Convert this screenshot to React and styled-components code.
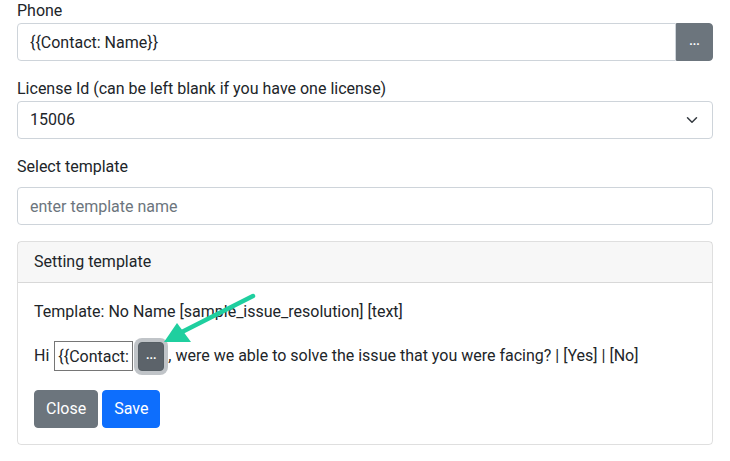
import React from 'react'
import styled, { createGlobalStyle } from 'styled-components'

const GlobalStyle = createGlobalStyle`
  html, body {
    margin: 0;
    padding: 0;
    background: #fff;
  }
  body {
    font-family: Roboto, "Liberation Sans", sans-serif;
    font-size: 16px;
    line-height: 1.5;
    color: #212529;
  }
`

const Page = styled.div`
  position: relative;
  width: 696px;
  padding: 0 17px;
  margin-top: -1px;
`

const Label = styled.label`
  display: block;
  height: 24px;
  margin-bottom: ${p => p.gap || 0}px;
`

const Group = styled.div`
  margin-bottom: 16px;
`

const InputGroup = styled.div`
  display: flex;
  height: 38px;
`

const TextInput = styled.input`
  flex: 1;
  min-width: 0;
  box-sizing: border-box;
  height: 38px;
  padding: 6px 12px;
  font: inherit;
  color: #212529;
  border: 1px solid #ced4da;
  border-radius: ${p => (p.joined ? '4px 0 0 4px' : '4px')};
  background: #fff;
  outline: none;
  &::placeholder {
    color: #6c757d;
  }
`

const AddonButton = styled.button`
  width: 37px;
  border: 1px solid #6c757d;
  background: #6c757d;
  color: #fff;
  border-radius: 0 4px 4px 0;
  font-family: inherit;
  font-size: 12px;
  font-weight: 700;
  padding: 0 0 2px;
`

const SelectBox = styled.div`
  display: flex;
  align-items: center;
  justify-content: space-between;
  box-sizing: border-box;
  height: 38px;
  padding: 6px 12px;
  border: 1px solid #ced4da;
  border-radius: 4px;
`

const Card = styled.div`
  position: relative;
  margin-top: 16px;
  border: 1px solid rgba(0, 0, 0, 0.125);
  border-radius: 4px;
`

const CardHeader = styled.div`
  padding: 8px 16px;
  background: rgba(0, 0, 0, 0.03);
  border-bottom: 1px solid rgba(0, 0, 0, 0.125);
`

const CardBody = styled.div`
  padding: 16px;
`

const Para = styled.p`
  margin: 1px 0 16px;
`

const MessageRow = styled.div`
  display: flex;
  align-items: center;
  height: 32px;
  margin-bottom: 18px;
  white-space: nowrap;
`

const SmallInput = styled.input`
  box-sizing: border-box;
  width: 79px;
  height: 30px;
  margin: 0 1px 0 5px;
  padding: 0 3px;
  font: inherit;
  color: #212529;
  border: 1px solid #767676;
  border-radius: 0;
  outline: none;
`

const DotsButton = styled.button`
  width: 26px;
  height: 29px;
  margin: 0 4px 0 4px;
  border: 1px solid #565e64;
  border-radius: 4px;
  background: #5c636a;
  color: #fff;
  font-family: inherit;
  font-size: 12px;
  font-weight: 700;
  padding: 0 0 2px;
  box-shadow: 0 0 0 4px rgba(130, 138, 145, 0.5);
`

const Actions = styled.div`
  display: flex;
  gap: 4px;
`

const Btn = styled.button`
  height: 38px;
  padding: 0 11px;
  border: 1px solid ${p => (p.primary ? '#0d6efd' : '#6c757d')};
  background: ${p => (p.primary ? '#0d6efd' : '#6c757d')};
  color: #fff;
  border-radius: 4px;
  font: inherit;
`

const Arrow = styled.svg`
  position: absolute;
  left: 0;
  top: 0;
  pointer-events: none;
`

export default function App() {
  return (
    <Page>
      <GlobalStyle />
      <Label>Phone</Label>
      <Group>
        <InputGroup>
          <TextInput joined defaultValue="{{Contact: Name}}" />
          <AddonButton>...</AddonButton>
        </InputGroup>
      </Group>

      <Label>License Id (can be left blank if you have one license)</Label>
      <Group>
        <SelectBox>
          <span>15006</span>
          <svg width="16" height="12" viewBox="0 0 16 16">
            <path d="m2 5 6 6 6-6" fill="none" stroke="#343a40" strokeWidth="2" strokeLinecap="round" strokeLinejoin="round" />
          </svg>
        </SelectBox>
      </Group>

      <Label gap={8}>Select template</Label>
      <TextInput style={{ width: '100%' }} placeholder="enter template name" />

      <Card>
        <CardHeader>Setting template</CardHeader>
        <CardBody>
          <Para>Template: No Name [sample_issue_resolution] [text]</Para>
          <MessageRow>
            Hi
            <SmallInput defaultValue="{{Contact: Name}}" />
            <DotsButton>...</DotsButton>
            , were we able to solve the issue that you were facing? | [Yes] | [No]
          </MessageRow>
          <Actions>
            <Btn>Close</Btn>
            <Btn primary>Save</Btn>
          </Actions>
        </CardBody>
      </Card>

      <Arrow width="730" height="461" viewBox="0 0 730 461">
        <line x1="253" y1="297" x2="174" y2="337" stroke="#1fcf9f" strokeWidth="4.5" strokeLinecap="round" />
        <polygon points="164,343 177,324 191,343" fill="#1fcf9f" />
      </Arrow>
    </Page>
  )
}
